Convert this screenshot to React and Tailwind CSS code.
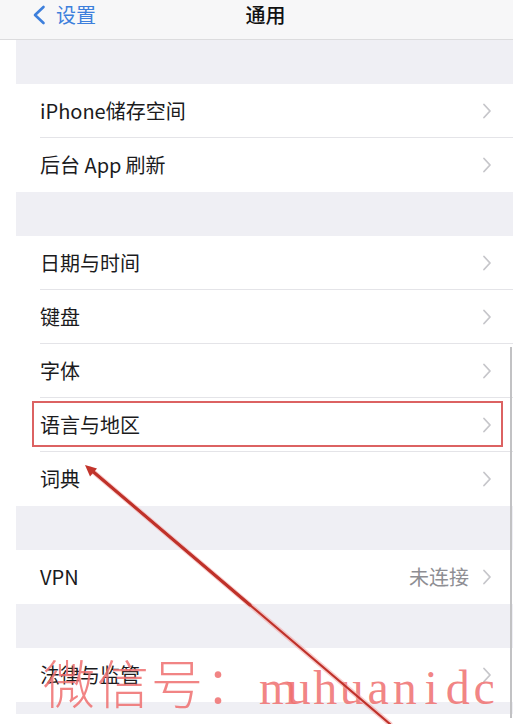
import React from "react";

const Chevron = () => (
  <svg width="10" height="16" viewBox="0 0 10 16" fill="none" className="shrink-0">
    <path d="M2 1.5 L8 8 L2 14.5" stroke="#c6c6ca" strokeWidth="1.8" strokeLinecap="round" strokeLinejoin="round" />
  </svg>
);

const Row = ({label, value, last}) => (
  <div className="bg-white pl-6">
    <div className={`h-[54px] flex items-center pr-[21px] ${last ? "" : "border-b border-[#e4e4e8]"}`}>
      <span className="flex-1 text-[20px] text-[#1b1b1d] whitespace-pre">{label}</span>
      {value && <span className="text-[20px] text-[#8e8e93] mr-[13px]">{value}</span>}
      <Chevron />
    </div>
  </div>
);

const Gap = ({h = "h-[44px]"}) => <div className={`${h} bg-[#efeff4]`} />;

const groups = [
  [{label: "iPhone储存空间"}, {label: "后台 App\u2009刷新"}],
  [{label: "日期与时间"}, {label: "键盘"}, {label: "字体"}, {label: "语言与地区"}, {label: "词典"}],
  [{label: "VPN", value: "未连接"}],
  [{label: "法律与监管"}],
];

const mark = "muhuanidc".split("");

export default function App() {
  return (
    <div className="relative w-[513px] h-[724px] overflow-hidden bg-white font-['Noto_Sans_CJK_SC','Noto_Sans',sans-serif]">
      <header className="h-[40px] bg-[#f7f7f8] border-b border-[#dcdcde] pl-4">
        <div className="grid grid-cols-[1fr_auto_1fr] items-center h-[29px]">
          <div className="flex items-center pl-4 text-[#3d7fdc]">
            <svg width="14" height="20" viewBox="0 0 14 20" fill="none">
              <path d="M11.5 2 L3 10 L11.5 18" stroke="#3d7fdc" strokeWidth="2.6" strokeLinecap="round" strokeLinejoin="round" />
            </svg>
            <span className="ml-[10px] text-[20px] leading-6">设置</span>
          </div>
          <div className="text-[20px] leading-6 font-medium text-[#111] pl-[2px]">通用</div>
          <div />
        </div>
      </header>

      <main className="ml-4">
        {groups.map((g, gi) => (
          <div key={gi}>
            <Gap />
            {g.map((r, ri) => (
              <Row key={r.label} label={r.label} value={r.value} last={ri === g.length - 1} />
            ))}
          </div>
        ))}
        <Gap h="h-[12px]" />
      </main>

      {/* highlight box */}
      <div className="absolute left-[32px] top-[401px] w-[471px] h-[46px] border-2 border-[#dc6262] pointer-events-none" />

      {/* scroll indicator */}
      <div className="absolute right-[1px] top-[347px] bottom-[6px] w-[2px] bg-[#c2c2c4]" />

      {/* watermark */}
      <div className="absolute left-[43px] top-[656px] flex items-baseline text-[#ef6f6f]/85 pointer-events-none whitespace-nowrap">
        <span className="text-[52px] leading-none font-light tracking-[2px] font-['Noto_Sans_CJK_SC',serif]">微信号：</span>
        {mark.map((c, i) => (
          <span key={i} className="inline-block w-[26.5px] text-center text-[48px] leading-none font-['Liberation_Serif',serif]">{c}</span>
        ))}
      </div>

      {/* arrow */}
      <svg className="absolute inset-0 pointer-events-none" width="513" height="724" viewBox="0 0 513 724">
        <path d="M90 469 L390 724" stroke="#f3a0a0" strokeOpacity="0.55" strokeWidth="5" strokeLinecap="round" />
        <path d="M90 469 L390 724" stroke="#bf3129" strokeWidth="2.2" strokeLinecap="round" />
        <path d="M90 469 L250 605" stroke="#bf3129" strokeWidth="3" strokeLinecap="round" />
        <polygon points="85,465 97,468.5 90,476.5" fill="#c2342b" />
      </svg>
    </div>
  );
}
